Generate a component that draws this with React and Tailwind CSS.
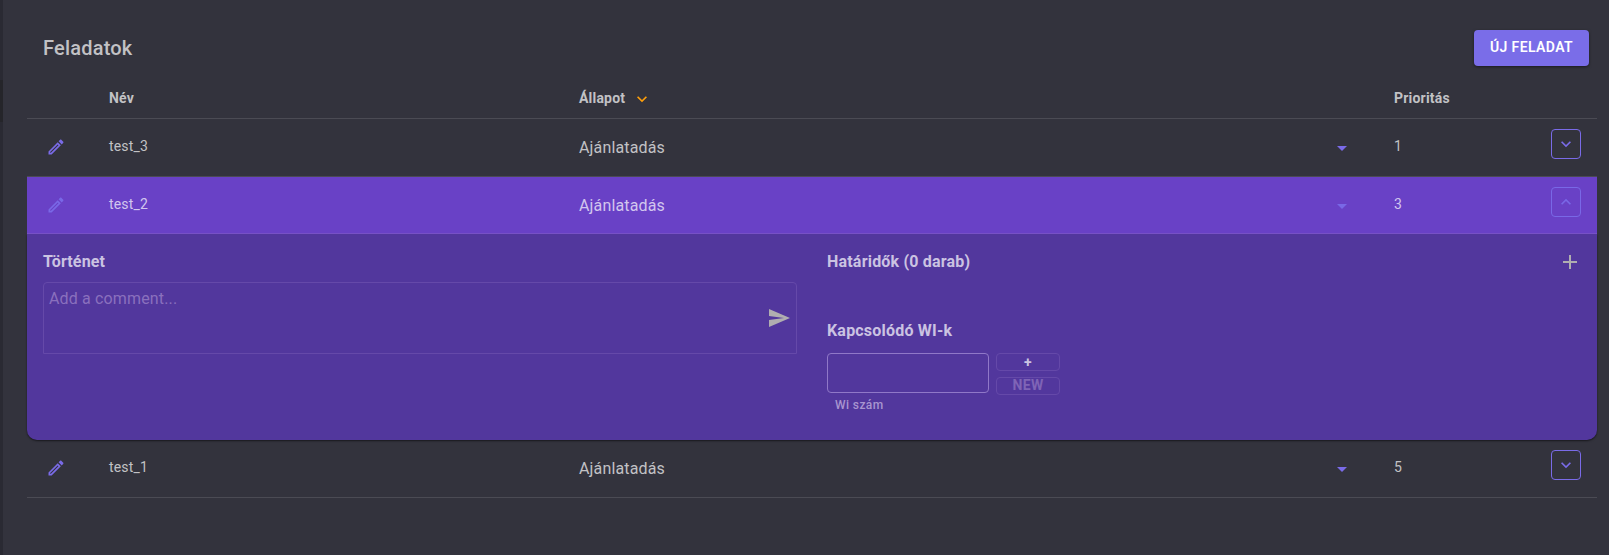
import React from "react";

const EDIT = "M14.06 9.02l.92.92L5.92 19H5v-.92l9.06-9.06M17.66 3c-.25 0-.51.1-.7.29l-1.83 1.83 3.75 3.75 1.83-1.83c.39-.39.39-1.02 0-1.41l-2.34-2.34c-.2-.2-.45-.29-.71-.29zm-3.6 3.19L3 17.25V21h3.75L17.81 9.94l-3.75-3.75z";
const DOWN = "M7.41 8.59 12 13.17l4.59-4.58L18 10l-6 6-6-6 1.41-1.41z";
const UP = "M7.41 15.41 12 10.83l4.59 4.58L18 14l-6-6-6 6z";
const CARET = "M7 10l5 5 5-5z";
const SEND = "M2.01 21 23 12 2.01 3 2 10l15 2-15 2z";
const PLUS = "M19 13h-6v6h-2v-6H5v-2h6V5h2v6h6v2z";

function Icon({ d, className }) {
  return (
    <svg viewBox="0 0 24 24" fill="currentColor" className={`block shrink-0 ${className}`}>
      <path d={d} />
    </svg>
  );
}

const COLS = "grid grid-cols-[82px_470px_814px_157px_1fr]";

function Row({ name, priority, open }) {
  return (
    <div
      className={`${COLS} border-b tracking-[0.15px] ${
        open ? "h-[57px] border-[#7b54cc] bg-[#6941c6] text-[#d2c6ee]" : "h-[58px] border-[#4b4b54] text-[#c2c2c5]"
      }`}
    >
      <div className={`pt-[18px] pl-[19px] ${open ? "text-[#7968e6]" : "text-[#7a6be8]"}`}>
        <Icon d={EDIT} className="size-5" />
      </div>
      <div className="pt-[17px] text-sm leading-5">{name}</div>
      <div className="flex items-start pt-[17px]">
        <span className="w-[751px] text-base leading-6">Ajánlatadás</span>
        <Icon d={CARET} className={`size-6 ${open ? "text-[#7968e6]" : "text-[#7a6be8]"}`} />
      </div>
      <div className="pt-[17px] pl-[1px] text-sm leading-5">{priority}</div>
      <div className="pt-[10px] pl-[1px]">
        <button
          className={`flex size-[30px] items-center justify-center rounded border ${
            open ? "border-[#7968e6] text-[#7968e6]" : "border-[#7a6be8] text-[#7a6be8]"
          }`}
        >
          <Icon d={open ? UP : DOWN} className="size-[20px]" />
        </button>
      </div>
    </div>
  );
}

function Details() {
  return (
    <div className="flex h-[206px] rounded-b-[10px] bg-[#52379d] px-4 tracking-[0.15px] text-[#cbc3e2] shadow-[0_1px_2px_rgba(0,0,0,0.55)]">
      <div className="w-[784px] pt-4">
        <h2 className="text-base leading-6 font-bold">Történet</h2>
        <div className="mt-2 flex h-[72px] w-[754px] items-center justify-between rounded-t border border-[#6549a9] pr-[5px] pl-[5px]">
          <span className="self-start pt-[4px] text-base leading-6 text-[#8a70bd]">Add a comment...</span>
          <Icon d={SEND} className="size-6 text-[#b0aeb0]" />
        </div>
      </div>
      <div className="flex-1 pt-4">
        <div className="flex items-center justify-between">
          <h2 className="text-base leading-6 font-bold tracking-[0.2px]">Határidők (0 darab)</h2>
          <Icon d={PLUS} className="mr-[-1px] size-6 text-[#b0aeb0]" />
        </div>
        <h2 className="mt-[45px] text-base leading-6 font-bold tracking-[0.2px]">Kapcsolódó WI-k</h2>
        <div className="mt-[10px] flex gap-[7px]">
          <div>
            <div className="h-10 w-[162px] rounded border border-[#9078c8]" />
            <div className="pt-[2px] pl-2 text-xs leading-5 font-medium tracking-[0.4px] text-[#a895d0]">Wi szám</div>
          </div>
          <div className="flex flex-col gap-[6px] text-sm font-bold">
            <button className="flex h-[18px] w-16 items-center justify-center rounded border border-[#6549a9] leading-4">+</button>
            <button className="flex h-[18px] w-16 items-center justify-center rounded border border-[#6549a9] pb-[2px] leading-4 tracking-[0.4px] text-[#7f64b6]">
              NEW
            </button>
          </div>
        </div>
      </div>
    </div>
  );
}

export default function App() {
  return (
    <div className="flex h-[555px] w-[1609px] overflow-hidden bg-[#33333d] font-[Roboto,sans-serif]">
      <aside className="w-[3px] bg-[#2a2a33] pt-20">
        <div className="h-[42px] bg-[#25252a]" />
      </aside>
      <main className="w-[1606px] pr-3 pl-6">
        <header className="flex h-[78px] items-start justify-between pt-[30px] pr-2 pl-4">
          <h1 className="pt-[4px] text-xl leading-7 font-medium tracking-[0.2px] text-[#c2c2c5]">Feladatok</h1>
          <button className="h-9 w-[115px] rounded bg-[#7a6de8] pb-[2px] text-sm font-semibold tracking-[0.4px] text-white shadow-[0_1px_3px_rgba(0,0,0,0.5)]">
            ÚJ FELADAT
          </button>
        </header>
        <section>
          <div className={`${COLS} h-[41px] border-b border-[#4b4b54] pt-[10px] text-sm leading-5 font-bold tracking-[0.2px] text-[#c2c2c5]`}>
            <span />
            <span>Név</span>
            <span className="flex h-5 items-center gap-[7px]">
              Állapot
              <Icon d={DOWN} className="mt-[2px] size-5 text-[#ff9f0a]" />
            </span>
            <span className="pl-[1px]">Prioritás</span>
          </div>
          <Row name="test_3" priority="1" />
          <Row name="test_2" priority="3" open />
          <Details />
          <Row name="test_1" priority="5" />
        </section>
      </main>
    </div>
  );
}
